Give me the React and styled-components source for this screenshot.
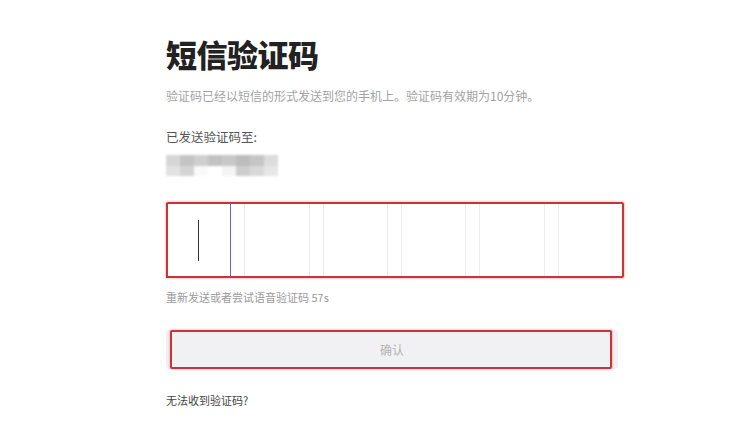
import React from 'react';
import styled, { createGlobalStyle } from 'styled-components';

const GlobalStyle = createGlobalStyle`
  html, body {
    margin: 0;
    padding: 0;
    background: #fff;
  }
  body {
    font-family: "Noto Sans CJK SC", "Noto Sans", "Liberation Sans", sans-serif;
  }
`;

const Page = styled.div`
  width: 750px;
  height: 443px;
  box-sizing: border-box;
  padding: 34px 0 0 166px;
  background: #fff;
  overflow: hidden;
`;

const Title = styled.h1`
  margin: 0;
  font-size: 31px;
  line-height: 40px;
  font-weight: 900;
  color: #222;
  letter-spacing: -0.5px;
`;

const Subtitle = styled.p`
  margin: 12px 0 0;
  font-size: 12px;
  line-height: 20px;
  color: #a3a3a3;
`;

const SentLabel = styled.p`
  margin: 21px 0 0;
  font-size: 12.5px;
  line-height: 20px;
  color: #555;
`;

const Phone = styled.div`
  margin-top: 8px;
  display: grid;
  grid-template-columns: repeat(8, 14px);
  grid-template-rows: 11px 10px;
  width: 112px;
  filter: blur(1px);
`;

const Pixel = styled.span`
  background: ${props => props.shade};
`;

const CodeWrap = styled.div`
  position: relative;
  margin-top: 27px;
  width: 457px;
`;

const CodeRow = styled.div`
  display: flex;
  gap: 13px;
  height: 75px;
`;

const Cell = styled.div`
  flex: 1;
  box-sizing: border-box;
  border: 1px solid ${props => props.active ? '#3a3a3a' : '#ededed'};
  border-right-color: ${props => props.active ? '#5a6cb3' : '#ededed'};
  display: flex;
  align-items: center;
  justify-content: center;
  background: #fff;
`;

const Caret = styled.span`
  width: 1px;
  height: 41px;
  background: #333;
`;

const Highlight = styled.div`
  position: absolute;
  top: ${props => props.top || 0}px;
  left: ${props => props.left || 0}px;
  right: ${props => props.right || 0}px;
  bottom: ${props => props.bottom || 0}px;
  border: 2px solid #c8343c;
  border-radius: 2px;
  box-shadow: 0 0 2px 1px rgba(230, 110, 110, 0.35);
  pointer-events: none;
`;

const Resend = styled.p`
  margin: 11px 0 0;
  font-size: 11px;
  line-height: 16px;
  color: #9a9a9a;
`;

const ButtonWrap = styled.div`
  position: relative;
  margin-top: 25px;
  width: 452px;
`;

const Confirm = styled.button`
  display: block;
  width: 100%;
  height: 39px;
  border: none;
  border-radius: 4px;
  background: #f1f1f3;
  color: #b4b4b4;
  font-family: inherit;
  font-size: 12px;
`;

const HelpLink = styled.a`
  display: block;
  margin-top: 23px;
  font-size: 11px;
  line-height: 16px;
  color: #444;
  text-decoration: none;
`;

const phoneShades = [
  '#d6d6d6', '#c4c4c4', '#cfcfcf', '#c2c2c2', '#c8c8c8', '#bdbdbd', '#c6c6c6', '#dcdcdc',
  '#e2e2e2', '#d4d4d4', '#fafafa', '#ffffff', '#f4f4f4', '#cdcdcd', '#d8d8d8', '#e6e6e6',
];

export default function App() {
  return (
    <Page>
      <GlobalStyle />
      <Title>短信验证码</Title>
      <Subtitle>验证码已经以短信的形式发送到您的手机上。验证码有效期为10分钟。</Subtitle>
      <SentLabel>已发送验证码至:</SentLabel>
      <Phone>
        {phoneShades.map((shade, i) => <Pixel key={i} shade={shade} />)}
      </Phone>
      <CodeWrap>
        <CodeRow>
          <Cell active><Caret /></Cell>
          <Cell />
          <Cell />
          <Cell />
          <Cell />
          <Cell />
        </CodeRow>
        <Highlight top={-1} left={0} right={-1} bottom={0} />
      </CodeWrap>
      <Resend>重新发送或者尝试语音验证码 57s</Resend>
      <ButtonWrap>
        <Confirm type="button">确认</Confirm>
        <Highlight top={0} left={4} right={6} bottom={0} />
      </ButtonWrap>
      <HelpLink href="#">无法收到验证码?</HelpLink>
    </Page>
  );
}
